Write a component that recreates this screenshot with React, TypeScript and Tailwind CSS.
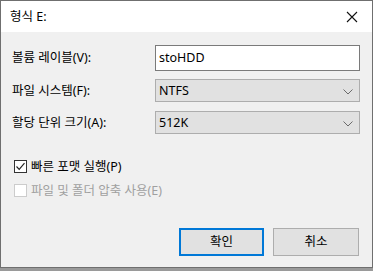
import React from "react";

const font = { fontFamily: '"Segoe UI", "Noto Sans", "Noto Sans CJK KR", sans-serif' };

function Chevron() {
  return (
    <svg width="10" height="6" viewBox="0 0 10 6" className="absolute right-[6px] top-[9px]">
      <path d="M0.5 0.5 L5 5 L9.5 0.5" fill="none" stroke="#6b6b6b" strokeWidth="1" />
    </svg>
  );
}

export default function App() {
  return (
    <div className="w-[373px] h-[271px] bg-[#9a9a9a] overflow-hidden" style={font}>
      <div className="w-[373px] h-[268px] border border-[#6f6f6f] flex flex-col bg-[#f0f0f0] text-[12.5px] leading-[16px] text-black">
        <div className="h-[31px] bg-white flex items-center justify-between pl-[9px] pr-[10px]">
          <span className="text-[12.5px] leading-none mt-[1px]">형식 E:</span>
          <svg width="12" height="12" viewBox="0 0 12 12" className="mr-[4px]">
            <path d="M1 1 L11 11 M11 1 L1 11" stroke="#111" strokeWidth="1.1" />
          </svg>
        </div>
        <div className="flex-1 flex flex-col pt-[13px] pl-[11px] pr-[12px]">
          <div className="flex items-center h-[26px]">
            <div className="w-[143px]">볼륨 레이블(V):</div>
            <div className="flex-1 h-[26px] bg-white border border-[#7a7a7a] flex items-center pl-[3px]">stoHDD</div>
          </div>
          <div className="flex items-center h-[23px] mt-[8px]">
            <div className="w-[143px]">파일 시스템(F):</div>
            <div className="relative flex-1 h-[23px] bg-[#e1e1e1] border border-[#adadad] flex items-center pl-[3px]">
              NTFS
              <Chevron />
            </div>
          </div>
          <div className="flex items-center h-[23px] mt-[9px]">
            <div className="w-[143px]">할당 단위 크기(A):</div>
            <div className="relative flex-1 h-[23px] bg-[#e1e1e1] border border-[#adadad] flex items-center pl-[3px]">
              512K
              <Chevron />
            </div>
          </div>
          <div className="flex items-center h-[13px] mt-[26px] pl-[2px]">
            <div className="w-[13px] h-[13px] shrink-0 border border-[#333] bg-white flex items-center justify-center">
              <svg width="11" height="11" viewBox="0 0 11 11">
                <path d="M1.5 5.5 L4.2 8.3 L9.5 2.2" fill="none" stroke="#222" strokeWidth="1.2" />
              </svg>
            </div>
            <span className="ml-[4px]">빠른 포맷 실행(P)</span>
          </div>
          <div className="flex items-center h-[13px] mt-[11px] pl-[2px]">
            <div className="w-[13px] h-[13px] shrink-0 border border-[#cccccc] bg-white" />
            <span className="ml-[4px] text-[#a0a0a0]">파일 및 폴더 압축 사용(E)</span>
          </div>
          <div className="flex justify-end gap-[9px] mt-[31px] pr-[1px]">
            <div className="w-[85px] h-[28px] bg-[#e1e1e1] border-2 border-[#0078d7] flex items-center justify-center">확인</div>
            <div className="w-[86px] h-[28px] bg-[#e1e1e1] border border-[#adadad] flex items-center justify-center">취소</div>
          </div>
        </div>
      </div>
    </div>
  );
}
